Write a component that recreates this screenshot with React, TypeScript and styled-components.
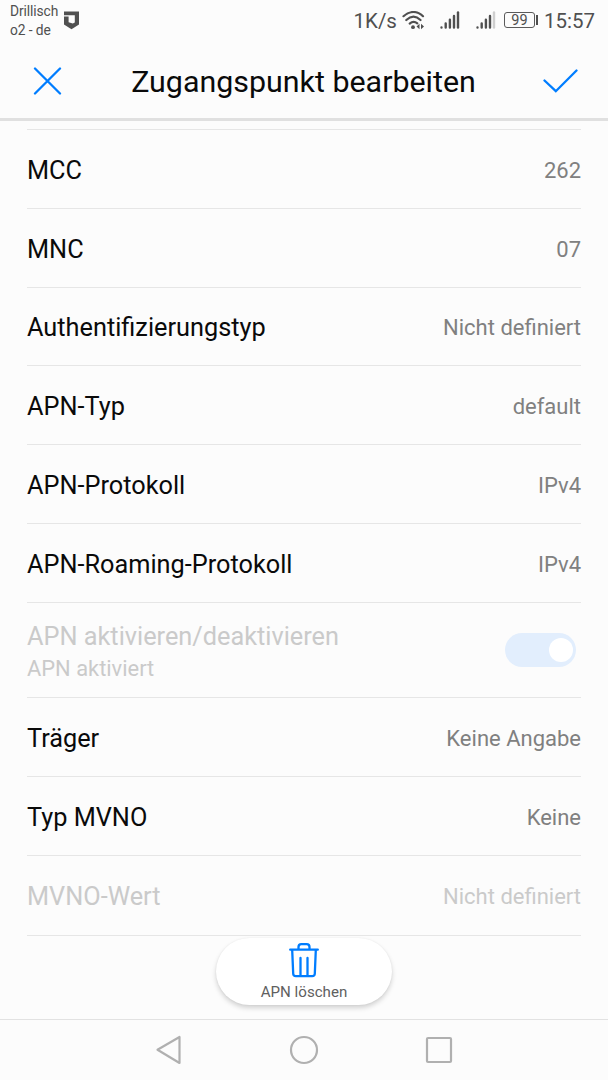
import React from "react";
import styled, { createGlobalStyle } from "styled-components";

const GlobalStyle = createGlobalStyle`
  * { box-sizing: border-box; }
  body { margin: 0; background: #fcfcfc; font-family: Roboto, sans-serif; }
  svg { display: block; flex: none; }
`;

const Screen = styled.div`
  width: 608px;
  height: 1080px;
  background: #fcfcfc;
  display: flex;
  flex-direction: column;
  overflow: hidden;
`;

const StatusBar = styled.div`
  height: 42px;
  flex: none;
  padding: 0 13px 0 10px;
  display: flex;
  align-items: flex-start;
  color: #505050;
`;

const Carrier = styled.div`
  width: 54px;
  padding-top: 2px;
  font-size: 13.8px;
  line-height: 18.5px;
  letter-spacing: -0.1px;
  white-space: nowrap;
`;

const StatusIcon = styled.div<{ $right?: number }>`
  padding-top: 11px;
  margin-right: ${(p) => p.$right ?? 0}px;
`;

const StatusText = styled.div<{ $left?: string; $right?: number }>`
  font-size: 20.5px;
  line-height: 24px;
  padding-top: 9px;
  white-space: nowrap;
  margin-left: ${(p) => p.$left ?? "0"};
  margin-right: ${(p) => p.$right ?? 0}px;
`;

const Battery = styled.div`
  display: flex;
  align-items: center;
  margin: 12px 6px 0 8px;
`;

const BatteryBody = styled.div`
  width: 31px;
  height: 16px;
  border: 1px solid #5a5a5a;
  border-radius: 3px;
  font-size: 14.5px;
  line-height: 15px;
  text-align: center;
`;

const BatteryTip = styled.div`
  width: 2px;
  height: 10px;
  margin-left: 1px;
  background: #505050;
`;

const Header = styled.header`
  height: 79px;
  flex: none;
  padding: 0 29px 0 32px;
  display: flex;
  align-items: center;
  justify-content: space-between;
  border-bottom: 3px solid #e0e0e0;
`;

const Title = styled.h1`
  margin: 4px 0 0 2px;
  font-size: 30.4px;
  line-height: 38px;
  font-weight: 400;
  color: #0a0a0a;
  white-space: nowrap;
`;

const List = styled.main`
  flex: none;
  margin: 8px 27px 0;
  border-top: 1px solid #e6e6e6;
`;

const Row = styled.div<{ $disabled?: boolean; $height?: number }>`
  height: ${(p) => p.$height ?? 78.8}px;
  padding-top: 4px;
  display: flex;
  align-items: center;
  justify-content: space-between;
  border-bottom: 1px solid #e6e6e6;
  color: ${(p) => (p.$disabled ? "#cacaca" : "#0a0a0a")};
`;

const Label = styled.div`
  font-size: 25.3px;
  line-height: 32px;
  white-space: nowrap;
`;

const SubLabel = styled.div`
  font-size: 21.9px;
  line-height: 32px;
`;

const LabelStack = styled.div`
  padding-top: 2px;
`;

const Value = styled.div<{ $disabled?: boolean }>`
  font-size: 22px;
  line-height: 30px;
  color: ${(p) => (p.$disabled ? "#cacaca" : "#808080")};
`;

const Switch = styled.div`
  width: 71px;
  height: 34px;
  margin: 0 5px 4px 0;
  padding: 5px 3px;
  border-radius: 17px;
  background: #e2eefd;
  display: flex;
  justify-content: flex-end;
`;

const Knob = styled.div`
  width: 24px;
  height: 24px;
  border-radius: 50%;
  background: #fff;
`;

const Footer = styled.div`
  flex: 1;
  padding-top: 2.5px;
  display: flex;
  justify-content: center;
  align-items: flex-start;
`;

const DeleteButton = styled.button`
  width: 176px;
  height: 67px;
  padding: 5px 0 0;
  border: 0;
  border-radius: 34px;
  background: #fff;
  box-shadow: 0 3px 5px rgba(0, 0, 0, 0.17), 0 0 2px rgba(0, 0, 0, 0.06);
  display: flex;
  flex-direction: column;
  align-items: center;
  font: 400 15.1px/18px Roboto, sans-serif;
  color: #606060;
`;

const ButtonText = styled.span`
  margin-top: 4px;
`;

const NavBar = styled.nav`
  height: 61px;
  flex: none;
  padding: 0 155px 1px;
  border-top: 1px solid #e2e2e2;
  display: flex;
  align-items: center;
  justify-content: space-between;
`;

const Signal = ({ weak }: { weak?: boolean }) => (
  <svg width="20" height="18" viewBox="0 0 20 18" stroke="#505050" strokeWidth="2.4" strokeLinecap="round">
    <path d="M1.5 16.4v.2M5.7 12.5v4.1M9.9 8.7v7.9M14 5v11.6" />
    <path d="M18 1.5v15.1" stroke={weak ? "#cfcfcf" : "#505050"} />
  </svg>
);

const rowsBefore = [
  ["MCC", "262"],
  ["MNC", "07"],
  ["Authentifizierungstyp", "Nicht definiert"],
  ["APN-Typ", "default"],
  ["APN-Protokoll", "IPv4"],
  ["APN-Roaming-Protokoll", "IPv4"],
];

const rowsAfter = [
  ["Träger", "Keine Angabe"],
  ["Typ MVNO", "Keine"],
];

const Setting = ({ label, value, disabled, height }: { label: string; value: string; disabled?: boolean; height?: number }) => (
  <Row $disabled={disabled} $height={height}>
    <Label>{label}</Label>
    <Value $disabled={disabled}>{value}</Value>
  </Row>
);

export default function App() {
  return (
    <Screen>
      <GlobalStyle />
      <StatusBar>
        <Carrier>
          Drillisch
          <br />
          o2 - de
        </Carrier>
        <StatusIcon>
          <svg width="16" height="19" viewBox="0 0 16 19">
            <path d="M0 .5h15v13l-7.500 4.700L0 13.500z" fill="#505050" />
            <path d="M0 4.200h10.800v7.300L8.800 12.600 4.600 11.200V5.600H0z" fill="#fcfcfc" />
          </svg>
        </StatusIcon>
        <StatusText $left="auto" $right={5}>1K/s</StatusText>
        <StatusIcon $right={14}>
          <svg width="24" height="19" viewBox="0 0 24 19" fill="none" stroke="#505050" strokeWidth="2.200" strokeLinecap="round">
            <path d="M1.500 5.200C7.600-.4 15.400-.4 21 5.200M4.300 9c4.600-4.200 9.800-4.200 14.200 0M7.700 12.600c2.600-2.300 5.200-2.300 7.600-.2" />
            <circle cx="11" cy="16.200" r="1.900" fill="#505050" stroke="none" />
            <path d="M17.500 12.800v5.400l-3-2.700zM19 12.800v5.400l3-2.700z" fill="#505050" stroke="none" />
          </svg>
        </StatusIcon>
        <StatusIcon $right={16}><Signal /></StatusIcon>
        <StatusIcon><Signal weak /></StatusIcon>
        <Battery>
          <BatteryBody>99</BatteryBody>
          <BatteryTip />
        </Battery>
        <StatusText>15:57</StatusText>
      </StatusBar>
      <Header>
        <svg width="30" height="30" viewBox="0 0 30 30" fill="none" stroke="#007dff" strokeWidth="2.300" strokeLinecap="round">
          <path d="M3 3.500l25 25M28 3.500L3 28.500" />
        </svg>
        <Title>Zugangspunkt bearbeiten</Title>
        <svg width="36" height="26" viewBox="0 0 36 26" fill="none" stroke="#007dff" strokeWidth="2.300" strokeLinecap="round">
          <path d="M1.500 13.500l11.300 10.700L33.500 3.500" />
        </svg>
      </Header>
      <List>
        {rowsBefore.map(([label, value]) => (
          <Setting key={label} label={label} value={value} />
        ))}
        <Row $disabled $height={95.5}>
          <LabelStack>
            <Label>APN aktivieren/deaktivieren</Label>
            <SubLabel>APN aktiviert</SubLabel>
          </LabelStack>
          <Switch>
            <Knob />
          </Switch>
        </Row>
        {rowsAfter.map(([label, value]) => (
          <Setting key={label} label={label} value={value} />
        ))}
        <Setting label="MVNO-Wert" value="Nicht definiert" disabled height={80} />
      </List>
      <Footer>
        <DeleteButton>
          <svg width="30" height="36" viewBox="0 0 30 36" fill="none" stroke="#007dff" strokeWidth="2.300" strokeLinecap="round" strokeLinejoin="round">
            <path d="M1.200 6.700h27.600M9.500 6.200V4q0-2.800 2.800-2.800h5.400q2.800 0 2.800 2.800V6.200M3.200 7.200l1 23.600q.1 2.300 2.600 2.300h16.400q2.500 0 2.600-2.300L26.800 7.200M11.500 15v17.500M18.500 15v17.500" />
          </svg>
          <ButtonText>APN löschen</ButtonText>
        </DeleteButton>
      </Footer>
      <NavBar>
        <svg width="28" height="30" viewBox="0 0 28 30" fill="none" stroke="#b0b0b0" strokeWidth="2.200" strokeLinejoin="round">
          <path d="M2.500 14.700L24.500 2v26z" />
        </svg>
        <svg width="30" height="30" viewBox="0 0 30 30" fill="none" stroke="#b0b0b0" strokeWidth="2.200">
          <circle cx="15" cy="15" r="13" />
        </svg>
        <svg width="28" height="28" viewBox="0 0 28 28" fill="none" stroke="#b0b0b0" strokeWidth="2.200">
          <rect x="2" y="2" width="24" height="24" rx="1" />
        </svg>
      </NavBar>
    </Screen>
  );
}
